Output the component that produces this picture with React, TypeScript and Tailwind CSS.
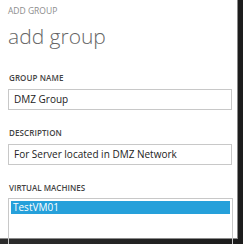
const font = "font-['Open_Sans','Noto_Sans',sans-serif]";

function Field({ label, value }: { label: string; value: string }) {
  return (
    <div className="flex flex-col">
      <div className="text-[8px] leading-[10px] font-semibold text-[#444] tracking-[0.1px] pl-[1px]">
        {label}
      </div>
      <div className="mt-[6px] h-[21px] w-[224px] border border-[#c8c8c8] flex items-center pl-[5px] text-[10px] text-[#222]">
        {value}
      </div>
    </div>
  );
}

export default function App() {
  return (
    <div className={`w-[243px] h-[244px] bg-gradient-to-r from-[#2c2c2c] to-[#1c1c1c] overflow-hidden ${font}`}>
      <div className="w-[238px] h-[239px] bg-white border-r border-b border-[#8a8a8a] pl-[8px] pt-[6px]">
        <div className="text-[8.5px] leading-[10px] text-[#8c8c8c]">ADD GROUP</div>
        <h1 className="mt-[8px] text-[21px] leading-[24px] font-light text-[#666]">add group</h1>

        <div className="mt-[25px] flex flex-col gap-[18px]">
          <Field label="GROUP NAME" value="DMZ Group" />
          <Field label="DESCRIPTION" value="For Server located in DMZ Network" />
        </div>

        <div className="mt-[18px] text-[8px] leading-[10px] font-semibold text-[#444] pl-[1px]">
          VIRTUAL MACHINES
        </div>
        <div className="mt-[5px] w-[225px] h-[60px] border border-[#c8c8c8] p-[2px]">
          <div className="h-[13px] bg-[#26a0da] text-white text-[10px] leading-[13px] pl-[2px]">
            TestVM01
          </div>
        </div>
      </div>
    </div>
  );
}
